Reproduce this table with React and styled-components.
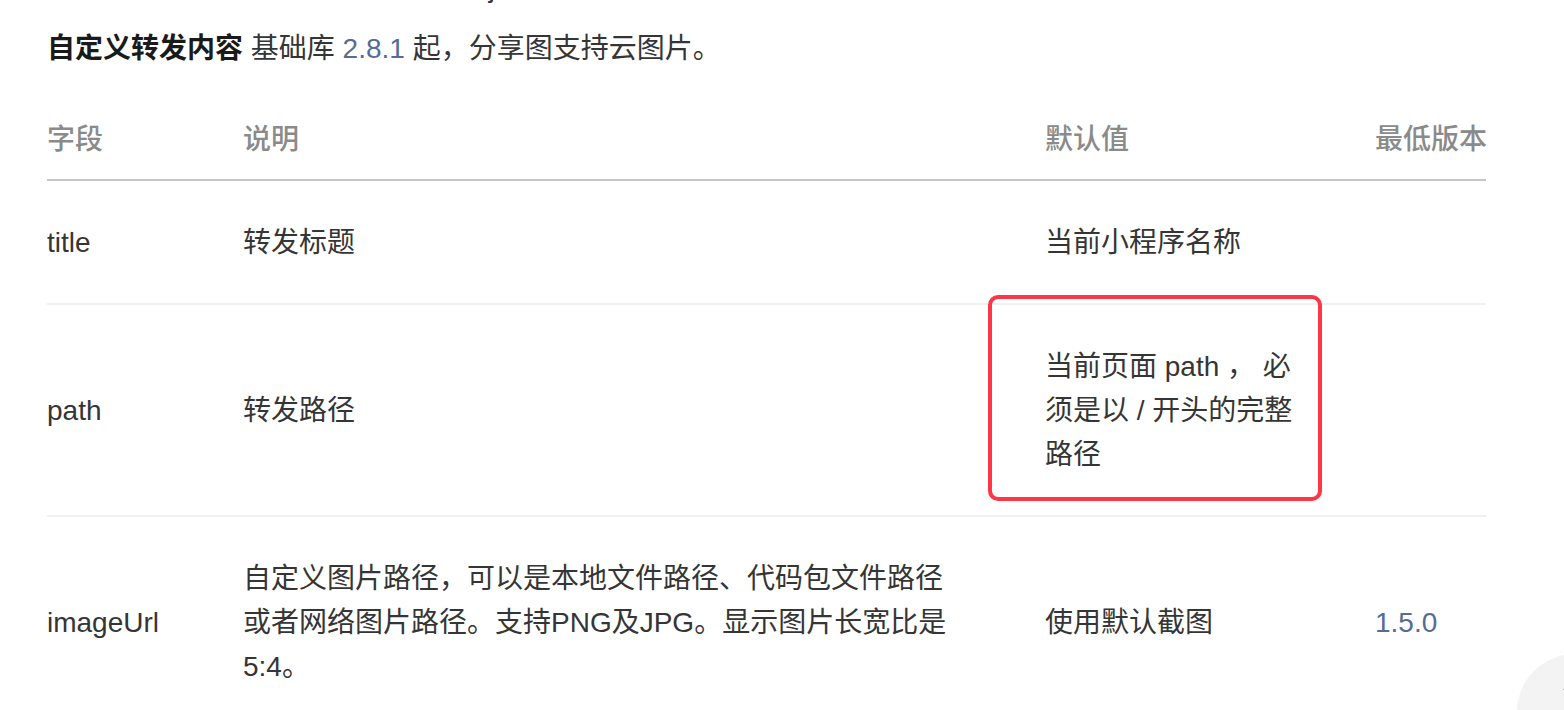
import React from 'react';
import styled, { createGlobalStyle } from 'styled-components';

const GlobalStyle = createGlobalStyle`
  html, body {
    margin: 0;
    padding: 0;
    background: #fff;
    overflow: hidden;
  }
  body {
    font-family: "Liberation Sans", "Noto Sans CJK SC", sans-serif;
    font-size: 28px;
    line-height: 44px;
    color: #353535;
  }
`;

const Page = styled.div`
  width: 1439px;
  padding-left: 47px;
`;

const Para = styled.p`
  margin: ${(p) => p.$top || 0}px 0 0;
  white-space: nowrap;
`;

const Strong = styled.strong`
  font-weight: 700;
  color: #1a1a1a;
`;

const Link = styled.a`
  color: #576b95;
  text-decoration: none;
`;

const Table = styled.div`
  margin-top: 27px;
`;

const Row = styled.div`
  display: grid;
  grid-template-columns: 196px 802px 330px 111px;
  align-items: center;
  padding: ${(p) => (p.$head ? '20px 0 17px' : '40px 0 38px')};
  border-bottom: 2px solid ${(p) => (p.$head ? '#c6c6c6' : '#f1f1f1')};
  color: ${(p) => (p.$head ? '#8a8a8a' : '#353535')};
  font-weight: ${(p) => (p.$head ? 500 : 400)};
  white-space: ${(p) => (p.$head ? 'nowrap' : 'normal')};
`;

const Cell = styled.div`
  position: relative;
  padding-right: ${(p) => p.$pr || 0}px;
`;

const Marker = styled.div`
  position: absolute;
  left: -57px;
  top: -50px;
  width: 334px;
  height: 206px;
  box-sizing: border-box;
  border: 4px solid #ff3646;
  border-radius: 10px;
  pointer-events: none;
`;

const TopButton = styled.div`
  position: fixed;
  right: -69px;
  bottom: -60px;
  width: 116px;
  height: 116px;
  border-radius: 50%;
  background: #f3f3f3;
  svg {
    position: absolute;
    left: 44px;
    top: 24px;
  }
`;

const rows = [
  { field: 'title', desc: '转发标题', def: '当前小程序名称', ver: '' },
  {
    field: 'path',
    desc: '转发路径',
    def: '当前页面 path ， 必须是以 / 开头的完整路径',
    ver: '',
    marked: true,
  },
  {
    field: 'imageUrl',
    desc: '自定义图片路径，可以是本地文件路径、代码包文件路径或者网络图片路径。支持PNG及JPG。显示图片长宽比是5:4。',
    def: '使用默认截图',
    ver: '1.5.0',
  },
];

export default function App() {
  return (
    <>
      <GlobalStyle />
      <Page>
        <Para $top={-34}>此事件处理函数需要 return 一个 Object，用于自定义转发内容，返回内容如下：</Para>
        <Para $top={17}>
          <Strong>自定义转发内容</Strong> 基础库 <Link>2.8.1</Link> 起，分享图支持云图片。
        </Para>
        <Table>
          <Row $head>
            <Cell>字段</Cell>
            <Cell>说明</Cell>
            <Cell>默认值</Cell>
            <Cell>最低版本</Cell>
          </Row>
          {rows.map((r) => (
            <Row key={r.field}>
              <Cell $pr={20}>{r.field}</Cell>
              <Cell $pr={80}>{r.desc}</Cell>
              <Cell $pr={70}>
                {r.marked && <Marker />}
                {r.def}
              </Cell>
              <Cell>{r.ver && <Link>{r.ver}</Link>}</Cell>
            </Row>
          ))}
        </Table>
      </Page>
      <TopButton>
        <svg width="20" height="20" viewBox="0 0 20 20" fill="none" stroke="#555" strokeWidth="2">
          <path d="M3 12l7-7 7 7" />
        </svg>
      </TopButton>
    </>
  );
}
